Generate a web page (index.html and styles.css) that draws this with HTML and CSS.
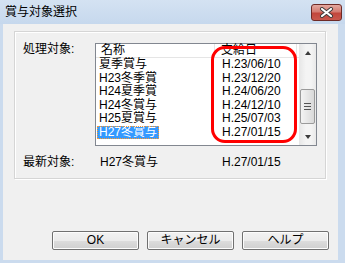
FILE: index.html
```html
<!DOCTYPE html>
<html lang="ja">
<head>
    <meta charset="UTF-8">
    <title>賞与対象選択</title>
    <link rel="stylesheet" href="styles.css">
</head>
<body>
    <div class="window">
        <div class="title-bar">
            <span class="title-text">賞与対象選択</span>
            <button class="close-button" aria-label="閉じる">
                <svg width="15" height="11" viewBox="0 0 15 11">
                    <path d="M3 2 L12 9 M12 2 L3 9" stroke="#3a3a3a" stroke-width="4" stroke-linecap="round"/>
                    <path d="M3 2 L12 9 M12 2 L3 9" stroke="#ffffff" stroke-width="2.2" stroke-linecap="round"/>
                </svg>
            </button>
        </div>

        <div class="client">
            <div class="group-box">
                <div class="target-row">
                    <span class="field-label">処理対象:</span>
                    <div class="list-view">
                        <div class="list-columns">
                            <div class="list-header">
                                <span class="col-name">名称</span>
                                <span class="col-date">支給日</span>
                                <span class="col-fill"></span>
                            </div>
                            <div class="list-row"><span class="col-name"><span class="item">夏季賞与</span></span><span class="col-date">H.23/06/10</span></div>
                            <div class="list-row"><span class="col-name"><span class="item">H23冬季賞</span></span><span class="col-date">H.23/12/20</span></div>
                            <div class="list-row"><span class="col-name"><span class="item">H24夏季賞</span></span><span class="col-date">H.24/06/20</span></div>
                            <div class="list-row"><span class="col-name"><span class="item">H24冬賞与</span></span><span class="col-date">H.24/12/10</span></div>
                            <div class="list-row"><span class="col-name"><span class="item">H25夏賞与</span></span><span class="col-date">H.25/07/03</span></div>
                            <div class="list-row"><span class="col-name"><span class="item selected">H27冬賞与</span></span><span class="col-date">H.27/01/15</span></div>
                        </div>
                        <div class="scrollbar">
                            <div class="scroll-arrow"><span class="arrow-up"></span></div>
                            <div class="scroll-track">
                                <div class="scroll-thumb">
                                    <span class="grip"></span>
                                    <span class="grip"></span>
                                    <span class="grip"></span>
                                </div>
                            </div>
                            <div class="scroll-arrow"><span class="arrow-down"></span></div>
                        </div>
                    </div>
                </div>

                <div class="latest-row">
                    <span class="latest-label">最新対象:</span>
                    <span class="latest-name">H27冬賞与</span>
                    <span class="latest-date">H.27/01/15</span>
                </div>
            </div>

            <div class="button-row">
                <button class="dialog-button">OK</button>
                <button class="dialog-button">キャンセル</button>
                <button class="dialog-button">ヘルプ</button>
            </div>
        </div>
    </div>

    <!-- red marker drawn over the date column -->
    <div class="highlight-mark"></div>
</body>
</html>
```

FILE: styles.css
```css
:root {
    --frame: #cbdbee;
    --face: #f0f0f0;
    --text: #000000;
    --select: #3399ff;
    --line: #e5e5e5;
}

* {
    box-sizing: border-box;
}

body {
    margin: 0;
    width: 345px;
    height: 263px;
    overflow: hidden;
    position: relative;
    background: var(--frame);
    font-family: "Liberation Sans", "Noto Sans CJK JP", sans-serif;
    font-size: 12px;
    line-height: 13px;
    color: var(--text);
}

.window {
    display: flex;
    flex-direction: column;
}

.title-bar {
    height: 24px;
    display: flex;
    align-items: flex-start;
    justify-content: space-between;
    padding: 0 3px 0 5px;
    background: linear-gradient(#d4e2f2, #c6d8ed);
}

.title-text {
    margin-top: 6px;
    font-size: 12px;
    line-height: 13px;
}

.close-button {
    width: 31px;
    height: 17px;
    margin-top: 4px;
    padding: 0;
    border: 1px solid #6e2a26;
    border-radius: 3px;
    background: linear-gradient(#e3a8a0 0%, #d47c72 45%, #c2463c 55%, #c9584d 100%);
    display: flex;
    align-items: center;
    justify-content: center;
}

.client {
    margin: 0 7px 0 3px;
    height: 236px;
    background: var(--face);
    padding-top: 7px;
}

.group-box {
    margin-left: 11px;
    width: 312px;
    height: 148px;
    border: 1px solid #d5d5d5;
    box-shadow: inset 1px 1px 0 #ffffff, 1px 1px 0 #ffffff;
    padding: 11px 0 0 8px;
}

.target-row {
    display: flex;
}

.field-label {
    width: 72px;
}

.list-view {
    width: 222px;
    height: 103px;
    border: 1px solid #828790;
    background: #ffffff;
    display: flex;
}

.list-columns {
    width: 203px;
}

.list-header {
    height: 14px;
    display: flex;
    border-bottom: 1px solid var(--line);
}

.list-header .col-name {
    padding-left: 5px;
    border-right: 1px solid var(--line);
}

.list-header .col-date {
    padding-left: 6px;
    border-right: 1px solid var(--line);
}

.col-fill {
    flex: 1;
}

.col-name {
    width: 119px;
    padding-left: 1px;
}

.col-date {
    width: 82px;
    padding-left: 7px;
}

.list-row {
    height: 13.5px;
    display: flex;
    align-items: center;
}

.item {
    display: inline-block;
    padding: 0 2px;
    height: 13.5px;
    line-height: 13.5px;
}

.item.selected {
    background: var(--select);
    color: #ffffff;
    outline: 1px dotted #ff9a2e;
    outline-offset: -1px;
}

.scrollbar {
    width: 17px;
    display: flex;
    flex-direction: column;
    background: linear-gradient(90deg, #e6e6e6, #f4f4f4 40%, #f4f4f4 70%, #e9e9e9);
}

.scroll-arrow {
    height: 17px;
    display: flex;
    align-items: center;
    justify-content: center;
}

.arrow-up {
    border-left: 3px solid transparent;
    border-right: 3px solid transparent;
    border-bottom: 4px solid #3c3c3c;
}

.arrow-down {
    border-left: 3px solid transparent;
    border-right: 3px solid transparent;
    border-top: 4px solid #3c3c3c;
}

.scroll-track {
    flex: 1;
    padding-top: 28px;
}

.scroll-thumb {
    margin: 0 1px;
    height: 35px;
    border: 1px solid #9a9a9a;
    border-radius: 2px;
    background: linear-gradient(90deg, #f3f3f3, #e6e6e6 50%, #d9d9d9);
    display: flex;
    flex-direction: column;
    align-items: center;
    justify-content: center;
    gap: 2px;
}

.grip {
    width: 7px;
    height: 1px;
    background: #555555;
}

.latest-row {
    display: flex;
    margin-top: 10px;
}

.latest-label {
    width: 77px;
}

.latest-name {
    width: 122px;
}

.button-row {
    display: flex;
    gap: 8px;
    margin: 52px 0 0 49px;
}

.dialog-button {
    width: 87px;
    height: 19px;
    padding: 0;
    border: 1px solid #707070;
    border-radius: 2px;
    background: linear-gradient(#f2f2f2 0%, #ebebeb 50%, #dddddd 51%, #cfcfcf 100%);
    box-shadow: inset 0 0 0 1px #fcfcfc;
    font-family: "Liberation Sans", "Noto Sans CJK JP", sans-serif;
    font-size: 12px;
    line-height: 13px;
    color: var(--text);
}

.highlight-mark {
    position: absolute;
    left: 211px;
    top: 46px;
    width: 86px;
    height: 97px;
    border: 3px solid #ff0000;
    border-radius: 14px;
}
```
